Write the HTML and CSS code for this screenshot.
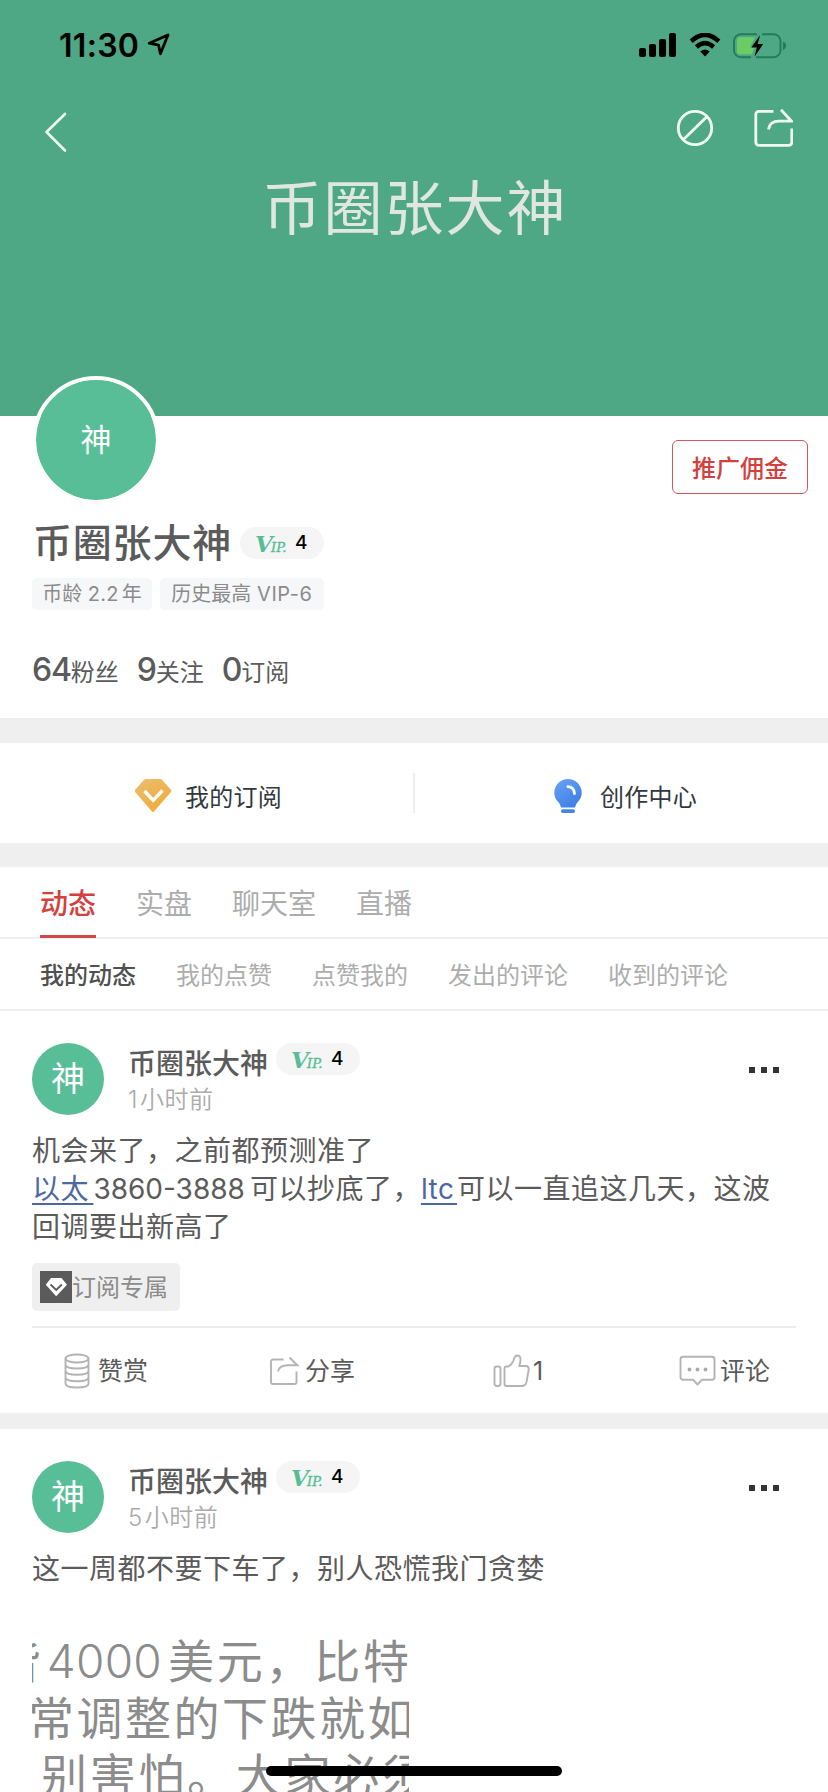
FILE: index.html
```html
<!DOCTYPE html>
<html lang="zh-CN">
<head>
<meta charset="utf-8">
<title>币圈张大神</title>
<link rel="stylesheet" href="styles.css">
</head>
<body>
<div class="screen">
  <header class="cover">
    <div class="status">
      <span class="clock">11:30</span>
      <svg class="loc" width="24" height="24" viewBox="0 0 24 24"><path d="M2.200 10.200 21 2 13.400 20.800 11.600 12.200Z" fill="none" stroke="#000" stroke-width="2.800" stroke-linejoin="round"/></svg>
      <svg class="signal" width="38" height="24" viewBox="0 0 38 24"><rect x="0" y="15" width="7" height="9" rx="2"/><rect x="10" y="11" width="7" height="13" rx="2"/><rect x="20" y="6" width="7" height="18" rx="2"/><rect x="30" y="0" width="7" height="24" rx="2"/></svg>
      <svg class="wifi" width="32" height="24" viewBox="0 0 32 24"><path d="M2.200 8.200Q16-4.400 29.800 8.200" fill="none" stroke="#000" stroke-width="4.600"/><path d="M7.400 14Q16 6.300 24.600 14" fill="none" stroke="#000" stroke-width="4.400"/><path d="M11.300 18.600Q16 14.400 20.700 18.600L16 23.600Z"/></svg>
      <svg class="battery" width="54" height="26" viewBox="0 0 54 26"><path d="M24 1.200H8A7 7 0 0 0 1 8v9a7 7 0 0 0 7 7.200h10M23 24.200h17.500a7 7 0 0 0 7-7V8a7 7 0 0 0-7-6.800H29" fill="none" stroke="#247a5c" stroke-width="1.900"/><path d="M50 8.500q3.200 1.500 3.200 4.200T50 17.500Z" fill="#247a5c"/><path d="M7.500 4.200H22L17 14h4.500L19 21.300H7.500a3.500 3.500 0 0 1-3.500-3.500V7.700a3.500 3.500 0 0 1 3.500-3.500Z" fill="#6dcb63"/><path d="M27.200 2 18.300 14.500h5.500L21.500 23.700 30.200 11.100h-5.600Z"/></svg>
    </div>
    <nav class="topbar">
      <svg class="back" width="24" height="42" viewBox="0 0 24 42"><path d="M22 3 3.500 21 22 39.500" fill="none" stroke="#effaf5" stroke-width="2.600" stroke-linecap="round" stroke-linejoin="round"/></svg>
      <svg class="block" width="38" height="38" viewBox="0 0 38 38" fill="none" stroke="#effaf5" stroke-width="2.800"><circle cx="19" cy="19" r="16.700"/><path d="M7.500 30.500 30.800 7.800"/></svg>
      <svg width="40" height="40" viewBox="0 0 40 40" fill="none" stroke="#effaf5" stroke-width="2.800"><path d="M20.500 3.300H5.800a3 3 0 0 0-3 3v28a3 3 0 0 0 3 3h30a3 3 0 0 0 3-3V20.500M28 1.800 38.500 13.200H26Q16.500 13.200 15.500 21.500"/></svg>
    </nav>
    <h1 class="cover-title">币圈张大神</h1>
  </header>

  <section class="profile">
    <div class="profile-top">
      <div class="avatar-lg">神</div>
      <button class="promo">推广佣金</button>
    </div>
    <div class="name-row"><span class="name">币圈张大神</span><span class="vip"><i class="vip-v">V</i><i class="vip-ip">IP.</i><b>4</b></span></div>
    <div class="tags"><span class="tag tag-age">币龄 <em>2.2</em>年</span><span class="tag tag-max">历史最高 <em>VIP-6</em></span></div>
    <div class="stats"><span class="stat"><b>64</b>粉丝</span><span class="stat"><b>9</b>关注</span><span class="stat"><b>0</b>订阅</span></div>
  </section>

  <section class="features">
    <a class="feature">
      <svg width="38" height="34" viewBox="0 0 38 34"><defs><linearGradient id="gold" x1="0" y1="0" x2=".7" y2="1"><stop offset="0" stop-color="#e9bf73"/><stop offset="1" stop-color="#f2aa37"/></linearGradient></defs><path d="M12 0h14a3 3 0 0 1 2 .8L37 11q.8 1-.1 2L20 32.600q-1 1-2 0L1.100 13q-.9-1-.1-2L10 .8a3 3 0 0 1 2-.8Z" fill="url(#gold)"/><path d="M10.500 12 19.200 21.300 28.500 11.500" fill="none" stroke="#fff" stroke-width="3.400"/></svg>
      <span>我的订阅</span>
    </a>
    <i class="feature-line"></i>
    <a class="feature">
      <svg width="38" height="36" viewBox="0 0 38 36"><defs><linearGradient id="blue" x1="0" y1="0" x2=".6" y2="1"><stop offset="0" stop-color="#69a5f4"/><stop offset="1" stop-color="#3f80e6"/></linearGradient></defs><path d="M19 1a13.700 13.700 0 0 1 13.700 13.700c0 5-2.200 7.300-4.200 9.500-1.500 1.700-1.700 3.300-2.500 5.200H12c-.8-1.900-1-3.500-2.500-5.200-2-2.200-4.200-4.500-4.200-9.500A13.700 13.700 0 0 1 19 1Z" fill="url(#blue)"/><path d="M18.800 8.600q6.200.2 6.700 7" fill="none" stroke="#fff" stroke-width="2.800" stroke-linecap="round"/><rect x="12" y="31.200" width="14" height="3.800" rx="1.800" fill="#4585e8"/></svg>
      <span>创作中心</span>
    </a>
  </section>

  <nav class="tabs"><a class="on">动态</a><a>实盘</a><a>聊天室</a><a>直播</a></nav>
  <nav class="subtabs"><a class="on">我的动态</a><a>我的点赞</a><a>点赞我的</a><a>发出的评论</a><a>收到的评论</a></nav>

  <article class="post">
    <div class="post-head">
      <div class="avatar">神</div>
      <div class="who">
        <div class="who-name"><span>币圈张大神</span><span class="vip"><i class="vip-v">V</i><i class="vip-ip">IP.</i><b>4</b></span></div>
        <div class="time"><span class="t1">1</span>小时前</div>
      </div>
      <div class="more"><i></i><i></i><i></i></div>
    </div>
    <div class="post-text">机会来了，之前都预测准了<br><a class="eth">以太 </a><span class="num">3860-3888</span>可以抄底了，<a class="ltc">ltc </a>可以一直追这几天，这波<br>回调要出新高了</div>
    <div class="exclusive">
      <svg width="32" height="32" viewBox="0 0 32 32"><rect width="32" height="32" fill="#5b5b5b"/><path d="M11 7h10.500l5.500 6.800L16.200 25.200 5.800 13.800Z" fill="#fff"/><path d="M10.500 13.500 16.200 19 21.800 13.500" fill="none" stroke="#5b5b5b" stroke-width="1.800"/></svg>
      <span>订阅专属</span>
    </div>
    <div class="actions">
      <a class="act act-coin"><svg width="26" height="36" viewBox="0 0 26 36" fill="none" stroke="#b4b4b4" stroke-width="1.900"><ellipse cx="13" cy="5.500" rx="11.500" ry="4"/><path d="M1.500 5.500v25q0 4 11.500 4t11.500-4v-25M1.500 11.500q0 4 11.500 4t11.500-4M1.500 17.800q0 4 11.500 4t11.500-4M1.500 24.200q0 4 11.500 4t11.500-4"/></svg><span>赞赏</span></a>
      <a class="act act-share"><svg width="30" height="30" viewBox="0 0 30 30" fill="none" stroke="#b4b4b4" stroke-width="1.900"><path d="M14.500 3.500H4a2 2 0 0 0-2 2V26a2 2 0 0 0 2 2h21.500a2 2 0 0 0 2-2V15.500M20.500 1.500 28.300 9.200H19Q9.500 9.500 9 15.500"/></svg><span>分享</span></a>
      <a class="act act-like"><svg width="37" height="34" viewBox="0 0 37 34" fill="none" stroke="#b4b4b4" stroke-width="1.900" stroke-linejoin="round"><rect x="1.500" y="12.500" width="6" height="19.500" rx="2.200"/><path d="M13 12.500h2.500Q19 10.500 20.500 6.500 21.500 2 24 1.500q3.500-.2 3.500 4 0 3-1.200 6.500H33q3 .3 2.700 3.500l-2.200 12.500q-1 4-4.500 4H13.500q-2 0-2-2V14.500q0-1.800 1.500-2Z"/></svg><span>1</span></a>
      <a class="act act-comment"><svg width="37" height="32" viewBox="0 0 37 32"><path d="M4 1.700h29a2.500 2.500 0 0 1 2.500 2.500v18a2.500 2.500 0 0 1-2.500 2.500H23L18.500 29.500 14 24.700H4a2.500 2.500 0 0 1-2.500-2.500v-18A2.500 2.500 0 0 1 4 1.700Z" fill="none" stroke="#b4b4b4" stroke-width="1.900" stroke-linejoin="round"/><g fill="#aaa"><circle cx="10.500" cy="14.500" r="1.900"/><circle cx="18.500" cy="14.500" r="1.900"/><circle cx="26.500" cy="14.500" r="1.900"/></g></svg><span>评论</span></a>
    </div>
  </article>

  <article class="post post-next">
    <div class="post-head">
      <div class="avatar">神</div>
      <div class="who">
        <div class="who-name"><span>币圈张大神</span><span class="vip"><i class="vip-v">V</i><i class="vip-ip">IP.</i><b>4</b></span></div>
        <div class="time"><span class="t5">5</span>小时前</div>
      </div>
      <div class="more"><i></i><i></i><i></i></div>
    </div>
    <div class="post-text">这一周都不要下车了，别人恐慌我门贪婪</div>
    <div class="picture">
      <div class="row-a">皆<span>4000</span>美元，比特</div>
      <div class="row-b">常调整的下跌就如</div>
      <div class="row-c">别害怕。大家必须</div>
    </div>
  </article>
  <div class="home-bar"></div>
</div>
</body>
</html>
```
FILE: styles.css
```css
* { box-sizing: border-box; }
body { margin: 0; background: #fff; font-family: Inter, "Noto Sans CJK SC", sans-serif; color: #5b5b5b; }
i, em { font-style: normal; }
b { font-weight: 500; }
svg { flex: none; display: block; }
.screen { position: relative; width: 828px; height: 1792px; overflow: hidden; }

.cover { height: 416px; background: #4ea886; }
.status { display: flex; height: 90px; padding: 33px 41px 0 59px; align-items: flex-start; }
.clock { font-size: 32px; line-height: 26px; font-weight: 600; color: #000; width: 88px; letter-spacing: 0.300px; white-space: nowrap; }
.signal { margin-left: auto; margin-right: 12px; }
.wifi { margin-right: 12px; }
.topbar { display: flex; height: 82px; padding: 18px 35px 0 43px; align-items: flex-start; }
.back { margin-top: 3px; }
.block { margin: 1px 39px 0 auto; }
.cover-title { margin: 0; padding-left: 2px; text-align: center; font-size: 59px; line-height: 74px; font-weight: 400; letter-spacing: 2px; color: #e0e6e2; }

.profile { height: 302px; padding: 0 20px 0 32px; }
.profile-top { display: flex; justify-content: space-between; height: 88px; }
.avatar-lg { width: 128px; height: 128px; margin-top: -40px; border: 4px solid #fff; border-radius: 50%; background: #58be98; background-clip: padding-box; color: #fff; font-size: 31px; line-height: 120px; text-align: center; }
.promo { width: 136px; height: 54px; margin: 24px 0 0; padding: 4px 0 0; border: 1px solid #d6575a; border-radius: 6px; background: #fff; color: #d3413e; font: 450 24px/48px Inter, "Noto Sans CJK SC", sans-serif; }
.name-row { display: flex; height: 50px; margin-top: 14px; align-items: center; }
.name { font-size: 39px; line-height: 50px; font-weight: 500; letter-spacing: 0.800px; padding-left: 1px; width: 208px; white-space: nowrap; }
.vip { display: flex; flex: none; width: 84px; height: 32px; padding-left: 15px; border-radius: 16px; background: #f5f5f5; line-height: 32px; }
.vip-v { width: 16px; font: italic 700 23px/34px "DejaVu Serif", serif; color: #55be96; }
.vip-ip { width: 24px; font: italic 400 13px/41px "DejaVu Serif", serif; color: #55be96; -webkit-text-stroke: 0.400px #55be96; }
.vip b { font-size: 19px; color: #000; }
.tags { display: flex; gap: 8px; margin-top: 10px; }
.tag { height: 32px; border-radius: 5px; background: #f6f7f9; color: #8b8b8b; font-size: 20px; line-height: 32px; text-align: center; white-space: nowrap; }
.tag-age { width: 120px; }
.tag-max { width: 164px; }
.tag em { letter-spacing: 0.300px; }
.tag-max em { letter-spacing: 0.600px; }
.tag-age em { margin-right: 3px; }
.stats { display: flex; gap: 18px; margin-top: 40px; font-size: 24px; line-height: 40px; }
.stat { white-space: nowrap; }
.stats b { font-size: 32px; letter-spacing: -1.200px; }

.features { display: flex; height: 149px; border-top: 25px solid #efefef; border-bottom: 24px solid #efefef; align-items: center; }
.feature { flex: 1; display: flex; justify-content: center; align-items: center; gap: 13px; padding-top: 6px; padding-left: 3px; font-size: 24px; line-height: 32px; color: #333840; }
.feature span { padding-top: 4px; letter-spacing: 0.300px; }
.feature-line { width: 2px; height: 40px; background: #eee; }

.tabs, .subtabs { display: flex; gap: 40px; height: 72px; padding-left: 40px; border-bottom: 2px solid #f0f0f0; color: #adadad; white-space: nowrap; }
.tabs { font-size: 28px; line-height: 74px; }
.tabs .on { height: 71px; border-bottom: 3px solid #d24845; color: #d3413e; font-weight: 500; }
.subtabs { font-size: 24px; line-height: 73px; }
.subtabs .on { color: #505050; font-weight: 450; }

.post { padding: 32px 32px 0; }
.post-next { border-top: 16px solid #efefef; }
.post-head { display: flex; height: 72px; }
.avatar { width: 72px; height: 72px; border-radius: 50%; background: #58be98; color: #fff; font-size: 34px; line-height: 72px; text-align: center; }
.who { margin-left: 24px; }
.who-name { display: flex; font-size: 28px; line-height: 42px; font-weight: 450; gap: 8px; }
.time { font-size: 24px; line-height: 29px; color: #ababab; font-weight: 350; letter-spacing: 0.500px; }
.t1 { margin-right: 2px; }
.t5 { margin-right: 2px; }
.more { display: flex; gap: 6px; margin: 24px 17px 0 auto; }
.more i { width: 6px; height: 6px; background: #333; }
.post-text { margin-top: 17px; font-size: 28px; line-height: 38px; letter-spacing: 0.500px; font-weight: 380; white-space: nowrap; }
.post-text a { color: #4d689f; text-decoration: underline; text-decoration-thickness: 2px; text-underline-offset: 4px; white-space: pre; }
.eth { word-spacing: -4px; }
.ltc { word-spacing: -5.800px; }
.num { margin-right: 5px; letter-spacing: 0; }
.exclusive { display: flex; align-items: center; width: 148px; height: 48px; margin-top: 17px; padding-left: 8px; border-radius: 5px; background: #efefef; font-size: 24px; color: #8b8b8b; white-space: nowrap; }
.exclusive span { padding-bottom: 3px; }
.actions { display: flex; height: 87px; margin-top: 15px; border-top: 2px solid #ececec; }
.act { display: flex; align-items: center; font-size: 25px; white-space: nowrap; }
.act span { padding-bottom: 3px; }
.act-coin { width: 206px; padding-left: 32px; gap: 8px; }
.act-share { width: 223px; padding-left: 31px; gap: 6px; }
.act-like { width: 186px; padding-left: 32px; gap: 3px; }
.act-like span { padding-bottom: 0; }
.act-comment { padding-left: 32px; gap: 4px; }

.picture { width: 377px; height: 180px; margin-top: 45px; overflow: hidden; color: #8c8c8c; font-size: 46px; line-height: 57px; letter-spacing: 2.700px; font-weight: 400; white-space: nowrap; }
.row-a { margin-left: -37px; }
.row-a span { margin: 0 6px 0 3px; letter-spacing: 0.300px; font-weight: 350; }
.row-b { margin-left: -4px; letter-spacing: 2.500px; }
.row-c { margin-left: 9px; }
.home-bar { position: absolute; left: 266px; top: 1766px; width: 296px; height: 10px; border-radius: 5px; background: #000; }
```
